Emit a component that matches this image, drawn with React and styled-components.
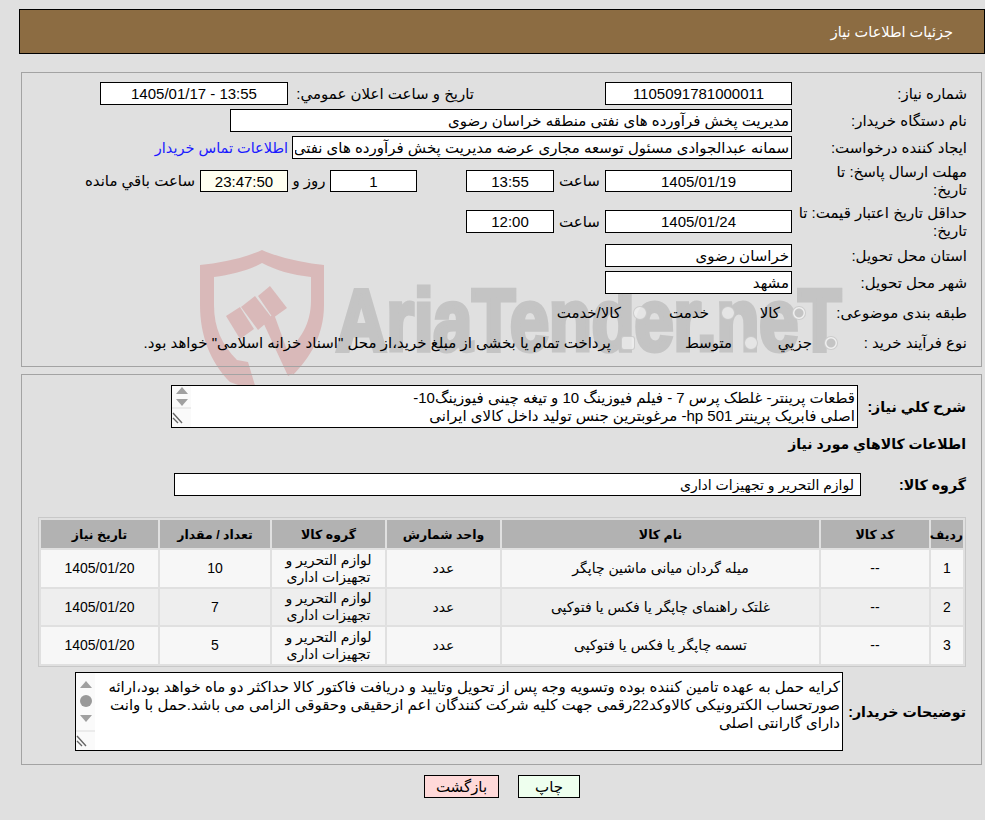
import React from 'react';
import styled, { createGlobalStyle } from 'styled-components';

const FONT = '"Liberation Sans", "DejaVu Sans", sans-serif';

const GlobalStyle = createGlobalStyle`
    html, body {
        margin: 0;
        padding: 0;
        background: #e0e0e0;
    }
    body {
        font-family: ${FONT};
        font-size: 15px;
        color: #000;
    }
`;

const Watermark = styled.svg`
    position: absolute;
    top: 0;
    left: 0;
    z-index: 0;
`;

const Page = styled.div`
    position: relative;
    z-index: 1;
    box-sizing: border-box;
    width: 985px;
    padding: 9px 0 0 19px;
`;

const Header = styled.div`
    box-sizing: border-box;
    display: flex;
    align-items: center;
    height: 45px;
    padding: 0 31px 0 0;
    background: #8c6c42;
    border: 1px solid #000;
    color: #fff;
    font-size: 14.5px;
`;

const Panel = styled.div`
    box-sizing: border-box;
    width: 961px;
    margin: ${(p) => p.$top}px 3px 0 0;
    padding: ${(p) => p.$padTop}px ${(p) => p.$padSide}px ${(p) => p.$padBottom}px 0;
    border: 1px solid #a3a3a3;
`;

const Row = styled.div`
    display: flex;
    align-items: center;
    height: ${(p) => p.$h || 23}px;
    margin-top: ${(p) => p.$top || 0}px;
`;

const Label = styled.div`
    flex: none;
    box-sizing: border-box;
    width: ${(p) => p.$w}px;
    line-height: 18px;
    white-space: nowrap;
    margin-inline-start: ${(p) => p.$gap || 0}px;
`;

const BoldLabel = styled(Label)`
    font-weight: bold;
    font-size: 14.2px;
`;

const Unit = styled.div`
    flex: none;
    width: ${(p) => p.$w}px;
    text-align: center;
`;

const Field = styled.input`
    flex: none;
    box-sizing: border-box;
    width: ${(p) => p.$w}px;
    height: ${(p) => p.$h || 23}px;
    margin: 0;
    margin-inline-start: ${(p) => p.$gap || 0}px;
    padding: 0 ${(p) => p.$pad || 2}px;
    border: 1px solid #000;
    border-radius: 0;
    outline: none;
    background: ${(p) => p.$bg || '#fff'};
    font-family: ${FONT};
    font-size: ${(p) => p.$size || 15}px;
    color: #000;
    text-align: ${(p) => (p.$center ? 'center' : 'right')};
`;

const ContactLink = styled.a`
    margin-inline-start: 4px;
    color: #1a1aff;
    font-size: 14.5px;
    text-decoration: none;
    white-space: nowrap;
`;

const Option = styled.label`
    flex: none;
    display: flex;
    align-items: center;
    gap: ${(p) => p.$gap || 12}px;
    width: ${(p) => (p.$w ? `${p.$w}px` : 'auto')};
    white-space: nowrap;
`;

const Radio = styled.input`
    appearance: none;
    flex: none;
    box-sizing: border-box;
    width: 14px;
    height: 14px;
    margin: 0;
    border: 1px solid rgba(190, 190, 190, 0.7);
    border-radius: ${(p) => (p.$square ? '3px' : '50%')};
    background: ${(p) =>
        p.$on
            ? 'radial-gradient(circle, #c4c4c4 0 4px, #f0f0f0 5px)'
            : 'rgba(240, 240, 240, 0.75)'};
`;

const TextBox = styled.div`
    flex: none;
    display: flex;
    box-sizing: border-box;
    width: ${(p) => p.$w}px;
    height: ${(p) => p.$h}px;
    background: #fff;
    border: 1px solid #000;
    overflow: hidden;
`;

const BoxText = styled.div`
    flex: 1;
    padding: ${(p) => p.$top}px 2px 0 0;
    line-height: 18px;
    white-space: nowrap;
    overflow: hidden;
`;

const ScrollRail = styled.svg`
    flex: none;
    display: block;
    background: #fafafa;
`;

const Heading = styled.div`
    height: 20px;
    margin-top: 6px;
    line-height: 20px;
    font-weight: bold;
    font-size: 14px;
`;

const ItemsTable = styled.table`
    box-sizing: border-box;
    width: 928px;
    margin: 21px 0 0 0;
    table-layout: fixed;
    border-collapse: separate;
    border-spacing: 2px;
    border: 1px solid #c8c8c8;
    font-size: 14px;
`;

const HeadCell = styled.th`
    height: 28px;
    padding: 0;
    background: #b2b2b2;
    font-size: 12.5px;
    font-weight: bold;
    text-align: center;
`;

const Cell = styled.td`
    height: ${(p) => (p.$odd ? 37 : 36)}px;
    padding: 0;
    background: ${(p) => (p.$odd ? '#f7f7f7' : '#eeeeee')};
    line-height: 17px;
    text-align: center;
`;

const Actions = styled.div`
    display: flex;
    justify-content: center;
    gap: 19px;
    margin-top: 10px;
`;

const ActionButton = styled.button`
    box-sizing: border-box;
    width: ${(p) => p.$w}px;
    height: 23px;
    padding: 0;
    background: ${(p) => p.$bg};
    border: 1px solid #000;
    font-family: ${FONT};
    font-size: 15px;
    color: #000;
`;

const columns = [
    ['ردیف', 32],
    ['کد کالا', 108],
    ['نام کالا', 317],
    ['واحد شمارش', 113],
    ['گروه کالا', 113],
    ['تعداد / مقدار', 110],
    ['تاریخ نیاز', 117],
];

const items = [
    { id: 1, name: 'میله گردان میانی ماشین چاپگر', qty: 10 },
    { id: 2, name: 'غلتک راهنمای چاپگر یا فکس یا فتوکپی', qty: 7 },
    { id: 3, name: 'تسمه چاپگر یا فکس یا فتوکپی', qty: 5 },
];

function LogoWatermark() {
    return (
        <Watermark width="985" height="820" viewBox="0 0 985 820">
            <g fill="#d9b9b9">
                <path d="M200 265C220 263 245 258 262 250C280 258 305 263 324 265L324 305C324 335 310 358 293 375L284 355C300 340 311 325 311 300L311 277C292 275 275 270 262 263C250 270 232 275 214 277L214 305C214 328 222 345 237 360L248 362L257 392L230 382C210 362 200 335 200 305Z" />
                <path d="M263 322L274 314L295 372L288 376Z" />
                <path d="M258 296L270 286L287 308L273 318Z" />
                <path d="M241 307L255 296L272 318L258 330Z" />
                <path d="M226 316L240 307L254 329L240 339Z" />
            </g>
            <text
                x="336"
                y="350"
                direction="ltr"
                fill="#c4c4c4"
                stroke="#c4c4c4"
                strokeWidth="5"
                fontFamily="Liberation Sans"
                fontWeight="bold"
                fontSize="88"
                textLength="505"
                lengthAdjust="spacingAndGlyphs"
            >
                AriaTender.neT
            </text>
        </Watermark>
    );
}

function Scrollbar({ height, thumb }) {
    const up = thumb ? 8 : 1;
    const down = thumb ? 42 : 13;
    const line = thumb ? 58 : 22;
    return (
        <ScrollRail width="19" height={height} viewBox={`0 0 19 ${height}`}>
            <path d={`M10 ${up}L16 ${up + 7}L4 ${up + 7}Z`} fill="#a0a0a0" />
            {thumb && <circle cx="10" cy="28" r="6" fill="#999" />}
            <path d={`M4 ${down}L16 ${down}L10 ${down + 7}Z`} fill="#a0a0a0" />
            <path d={`M0 ${line}H19`} stroke="#dcdcdc" />
            <path
                d={`M1 ${line + 5}L10 ${line + 15}M1 ${line + 10}L6 ${line + 15}`}
                stroke="#666"
                strokeWidth="1.4"
                fill="none"
            />
        </ScrollRail>
    );
}

export default function App() {
    return (
        <div dir="rtl">
            <GlobalStyle />
            <LogoWatermark />
            <Page>
                <Header>جزئيات اطلاعات نياز</Header>

                <Panel $top={18} $padTop={9} $padSide={14} $padBottom={13}>
                    <Row>
                        <Label $w={175}>شماره نياز:</Label>
                        <Field $w={187} $center readOnly value="1105091781000011" />
                        <Label $w={186} $gap={131}>تاريخ و ساعت اعلان عمومي:</Label>
                        <Field $w={188} $center readOnly value="1405/01/17 - 13:55" dir="ltr" />
                    </Row>
                    <Row $top={4}>
                        <Label $w={175}>نام دستگاه خريدار:</Label>
                        <Field $w={562} readOnly value="مدیریت پخش فرآورده های نفتی منطقه خراسان رضوی" />
                    </Row>
                    <Row $top={4}>
                        <Label $w={175}>ايجاد كننده درخواست:</Label>
                        <Field
                            $w={500}
                            readOnly
                            value="سمانه عبدالجوادی مسئول توسعه مجاری عرضه مدیریت پخش فرآورده های نفتی منطقه خراسان رضوی"
                        />
                        <ContactLink href="#">اطلاعات تماس خريدار</ContactLink>
                    </Row>
                    <Row $top={11} $h={22}>
                        <Label $w={175}>مهلت ارسال پاسخ: تا<br />تاريخ:</Label>
                        <Field $w={187} $h={22} $center readOnly value="1405/01/19" />
                        <Unit $w={51}>ساعت</Unit>
                        <Field $w={88} $h={22} $center readOnly value="13:55" />
                        <Field $w={87} $h={22} $gap={49} $center readOnly value="1" />
                        <Unit $w={42}>روز و</Unit>
                        <Field $w={88} $h={22} $center $bg="#fffff0" readOnly value="23:47:50" />
                        <Label $w={115} $gap={5}>ساعت باقي مانده</Label>
                    </Row>
                    <Row $top={18}>
                        <Label $w={175}>حداقل تاريخ اعتبار قيمت: تا<br />تاريخ:</Label>
                        <Field $w={187} $center readOnly value="1405/01/24" />
                        <Unit $w={51}>ساعت</Unit>
                        <Field $w={88} $center readOnly value="12:00" />
                    </Row>
                    <Row $top={11}>
                        <Label $w={175}>استان محل تحويل:</Label>
                        <Field $w={187} readOnly value="خراسان رضوی" />
                    </Row>
                    <Row $top={4}>
                        <Label $w={175}>شهر محل تحويل:</Label>
                        <Field $w={187} readOnly value="مشهد" />
                    </Row>
                    <Row $top={9} $h={20}>
                        <Label $w={161}>طبقه بندی موضوعی:</Label>
                        <Option $w={71}><Radio type="radio" disabled $on />کالا</Option>
                        <Option $w={88}><Radio type="radio" disabled />خدمت</Option>
                        <Option><Radio type="radio" disabled />کالا/خدمت</Option>
                    </Row>
                    <Row $top={10} $h={20}>
                        <Label $w={129}>نوع فرآيند خريد :</Label>
                        <Option $w={80}><Radio type="radio" disabled $on />جزيي</Option>
                        <Option $w={123}><Radio type="radio" disabled />متوسط</Option>
                        <Option $gap={10}>
                            <Radio type="checkbox" disabled $square />
                            پرداخت تمام یا بخشی از مبلغ خرید،از محل "اسناد خزانه اسلامی" خواهد بود.
                        </Option>
                    </Row>
                </Panel>

                <Panel $top={7} $padTop={10} $padSide={15} $padBottom={13}>
                    <Row $h={43}>
                        <BoldLabel $w={108}>شرح كلي نياز:</BoldLabel>
                        <TextBox $w={687} $h={43}>
                            <BoxText $top={3}>
                                قطعات پرینتر- غلطک پرس 7 - فیلم فیوزینگ 10 و تیغه چینی فیوزینگ10-
                                <br />
                                اصلی فابریک پرینتر hp 501- مرغوبترین جنس تولید داخل کالای ایرانی
                            </BoxText>
                            <Scrollbar height={41} />
                        </TextBox>
                    </Row>
                    <Heading>اطلاعات كالاهاي مورد نياز</Heading>
                    <Row $top={19}>
                        <BoldLabel $w={105}>گروه كالا:</BoldLabel>
                        <Field $w={687} $size={14} $pad={6} readOnly value="لوازم التحریر و تجهیزات اداری" />
                    </Row>
                    <ItemsTable>
                        <colgroup>
                            {columns.map(([title, width]) => (
                                <col key={title} style={{ width }} />
                            ))}
                        </colgroup>
                        <thead>
                            <tr>
                                {columns.map(([title]) => (
                                    <HeadCell key={title}>{title}</HeadCell>
                                ))}
                            </tr>
                        </thead>
                        <tbody>
                            {items.map((item) => {
                                const odd = item.id % 2 === 1;
                                return (
                                    <tr key={item.id}>
                                        <Cell $odd={odd}>{item.id}</Cell>
                                        <Cell $odd={odd}>--</Cell>
                                        <Cell $odd={odd}>{item.name}</Cell>
                                        <Cell $odd={odd}>عدد</Cell>
                                        <Cell $odd={odd}>لوازم التحریر و<br />تجهیزات اداری</Cell>
                                        <Cell $odd={odd}>{item.qty}</Cell>
                                        <Cell $odd={odd}>1405/01/20</Cell>
                                    </tr>
                                );
                            })}
                        </tbody>
                    </ItemsTable>
                    <Row $top={5} $h={79}>
                        <BoldLabel $w={123}>توضيحات خريدار:</BoldLabel>
                        <TextBox $w={768} $h={79}>
                            <BoxText $top={5}>
                                کرایه حمل به عهده تامین کننده بوده وتسویه وجه پس از تحویل وتایید و دریافت فاکتور کالا حداکثر دو ماه خواهد بود،ارائه
                                <br />
                                صورتحساب الکترونیکی کالاوکد22رقمی جهت کلیه شرکت کنندگان اعم ازحقیقی وحقوقی الزامی می باشد.حمل با وانت
                                <br />
                                دارای گارانتی اصلی
                            </BoxText>
                            <Scrollbar height={77} thumb />
                        </TextBox>
                    </Row>
                </Panel>

                <Actions>
                    <ActionButton $w={62} $bg="#eeffee">چاپ</ActionButton>
                    <ActionButton $w={75} $bg="#ffd9d9">بازگشت</ActionButton>
                </Actions>
            </Page>
        </div>
    );
}
